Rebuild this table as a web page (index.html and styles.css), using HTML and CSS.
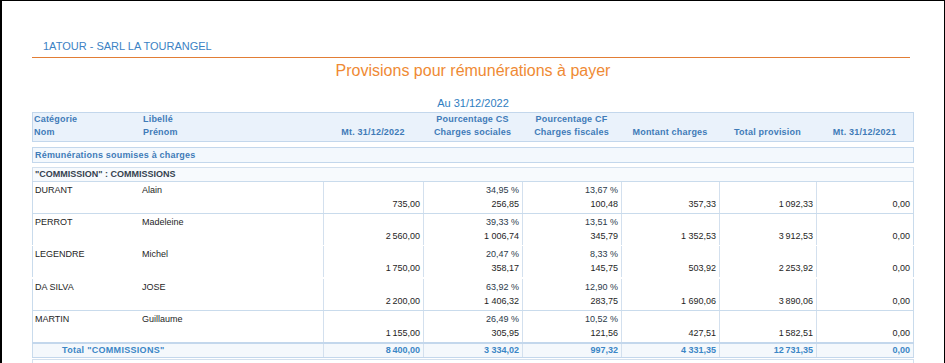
FILE: index.html
```html
<!DOCTYPE html>
<html lang="fr">
<head>
<meta charset="utf-8">
<title>Provisions pour rémunérations à payer</title>
<link rel="stylesheet" href="styles.css">
</head>
<body>
<div class="frame">
  <div class="report">
    <div class="company">1ATOUR - SARL LA TOURANGEL</div>
    <h1 class="title">Provisions pour rémunérations à payer</h1>
    <div class="date">Au 31/12/2022</div>

    <div class="thead">
      <div class="hc left"><span>Catégorie</span><span>Nom</span></div>
      <div class="hc left"><span>Libellé</span><span>Prénom</span></div>
      <div class="hc"><span></span><span>Mt. 31/12/2022</span></div>
      <div class="hc"><span>Pourcentage CS</span><span>Charges sociales</span></div>
      <div class="hc"><span>Pourcentage CF</span><span>Charges fiscales</span></div>
      <div class="hc"><span></span><span>Montant charges</span></div>
      <div class="hc"><span></span><span>Total provision</span></div>
      <div class="hc"><span></span><span>Mt. 31/12/2021</span></div>
    </div>

    <div class="section">Rémunérations soumises à charges</div>

    <div class="group">
      <div class="group-title">"COMMISSION" : COMMISSIONS</div>

      <div class="row sep">
        <div class="cell name"><span>DURANT</span><span></span></div>
        <div class="cell"><span>Alain</span><span></span></div>
        <div class="cell num"><span></span><span>735,00</span></div>
        <div class="cell num"><span class="pct">34,95 %</span><span>256,85</span></div>
        <div class="cell num"><span class="pct">13,67 %</span><span>100,48</span></div>
        <div class="cell num"><span></span><span>357,33</span></div>
        <div class="cell num"><span></span><span>1&thinsp;092,33</span></div>
        <div class="cell num last"><span></span><span>0,00</span></div>
      </div>

      <div class="row sep">
        <div class="cell name"><span>PERROT</span><span></span></div>
        <div class="cell"><span>Madeleine</span><span></span></div>
        <div class="cell num"><span></span><span>2&thinsp;560,00</span></div>
        <div class="cell num"><span class="pct">39,33 %</span><span>1 006,74</span></div>
        <div class="cell num"><span class="pct">13,51 %</span><span>345,79</span></div>
        <div class="cell num"><span></span><span>1 352,53</span></div>
        <div class="cell num"><span></span><span>3&thinsp;912,53</span></div>
        <div class="cell num last"><span></span><span>0,00</span></div>
      </div>

      <div class="row">
        <div class="cell name"><span>LEGENDRE</span><span></span></div>
        <div class="cell"><span>Michel</span><span></span></div>
        <div class="cell num"><span></span><span>1&thinsp;750,00</span></div>
        <div class="cell num"><span class="pct">20,47 %</span><span>358,17</span></div>
        <div class="cell num"><span class="pct">8,33 %</span><span>145,75</span></div>
        <div class="cell num"><span></span><span>503,92</span></div>
        <div class="cell num"><span></span><span>2&thinsp;253,92</span></div>
        <div class="cell num last"><span></span><span>0,00</span></div>
      </div>

      <div class="row wide">
        <div class="cell name"><span>DA SILVA</span><span></span></div>
        <div class="cell"><span>JOSE</span><span></span></div>
        <div class="cell num"><span></span><span>2&thinsp;200,00</span></div>
        <div class="cell num"><span class="pct">63,92 %</span><span>1 406,32</span></div>
        <div class="cell num"><span class="pct">12,90 %</span><span>283,75</span></div>
        <div class="cell num"><span></span><span>1 690,06</span></div>
        <div class="cell num"><span></span><span>3&thinsp;890,06</span></div>
        <div class="cell num last"><span></span><span>0,00</span></div>
      </div>

      <div class="row sep">
        <div class="cell name"><span>MARTIN</span><span></span></div>
        <div class="cell"><span>Guillaume</span><span></span></div>
        <div class="cell num"><span></span><span>1&thinsp;155,00</span></div>
        <div class="cell num"><span class="pct">26,49 %</span><span>305,95</span></div>
        <div class="cell num"><span class="pct">10,52 %</span><span>121,56</span></div>
        <div class="cell num"><span></span><span>427,51</span></div>
        <div class="cell num"><span></span><span>1&thinsp;582,51</span></div>
        <div class="cell num last"><span></span><span>0,00</span></div>
      </div>

      <div class="total">
        <div class="tcell label">Total "COMMISSIONS"</div>
        <div class="tcell num">8&thinsp;400,00</div>
        <div class="tcell num">3 334,02</div>
        <div class="tcell num">997,32</div>
        <div class="tcell num">4 331,35</div>
        <div class="tcell num">12&thinsp;731,35</div>
        <div class="tcell num last">0,00</div>
      </div>
    </div>

    <div class="next"></div>
  </div>
</div>
</body>
</html>
```

FILE: styles.css
```css
* { box-sizing: border-box; }

html, body {
  margin: 0;
  padding: 0;
  background: #fff;
}

body {
  font-family: "Liberation Sans", Arial, sans-serif;
  color: #222;
}

.frame {
  width: 945px;
  height: 363px;
  border-top: 1px solid #000;
  border-left: 2px solid #000;
  border-right: 1px solid #000;
  overflow: hidden;
}

.report {
  margin-left: 30px;
  width: 882px;
}

.company {
  width: 878px;
  padding: 39px 0 4px 11px;
  font-size: 11px;
  line-height: 13px;
  color: #3b82c4;
  border-bottom: 1px solid #e27d35;
}

.title {
  margin: 4px 0 0;
  font-size: 16px;
  line-height: 18px;
  font-weight: normal;
  text-align: center;
  color: #ef8a34;
}

.date {
  margin-top: 17px;
  text-align: center;
  font-size: 11px;
  line-height: 13px;
  color: #2f7ec1;
}

.thead {
  margin-top: 2px;
  display: grid;
  grid-template-columns: 109px 181px 100px 99px 99px 98px 97px 97px;
  border: 1px solid #c3d7ec;
  background: #eaf2fb;
  padding-bottom: 2px;
}

.hc {
  display: flex;
  flex-direction: column;
  align-items: center;
  font-size: 9px;
  font-weight: bold;
  line-height: 13px;
  color: #3f7bb8;
  letter-spacing: 0.2px;
}

.hc span { height: 13px; white-space: nowrap; }

.hc.left { align-items: flex-start; padding-left: 1px; }

.section {
  margin-top: 5px;
  height: 16px;
  border: 1px solid #c3d7ec;
  background: #f3f8fd;
  padding-left: 2px;
  font-size: 9px;
  font-weight: bold;
  line-height: 14px;
  color: #3f7bb8;
  letter-spacing: 0.2px;
}

.group { margin-top: 4px; }

.group-title {
  height: 14px;
  border: 1px solid #d3e0ee;
  border-bottom: none;
  background: #f7fafd;
  padding-left: 2px;
  font-size: 9px;
  font-weight: bold;
  line-height: 13px;
  color: #34414f;
}

.row {
  display: grid;
  grid-template-columns: 110px 181px 100px 99px 99px 98px 97px 98px;
  border-top: 1px solid #fff;
}

.row.sep { border-top-color: #c9dbec; }
.row.wide { border-top-width: 2px; }

.cell {
  display: flex;
  flex-direction: column;
  padding: 1px 0 2px;
  font-size: 9px;
  line-height: 14px;
  color: #1e1e1e;
  white-space: nowrap;
}

.cell span { height: 14px; }

.cell.name {
  border-left: 1px solid #c9dbec;
  padding-left: 2px;
}

.cell.num {
  border-left: 1px solid #d3e0ee;
  text-align: right;
  padding-right: 3px;
}

.cell.last, .tcell.last { border-right: 1px solid #c9dbec; }

.pct { color: #2c3a4a; }

.total {
  display: grid;
  grid-template-columns: 291px 100px 99px 99px 98px 97px 98px;
  height: 16px;
  border-top: 2px solid #c3d7ec;
  border-bottom: 1px solid #c3d7ec;
  background: #f4f8fc;
}

.tcell {
  font-size: 9px;
  line-height: 13px;
  font-weight: bold;
  color: #3b86c6;
  white-space: nowrap;
}

.tcell.label {
  border-left: 1px solid #c9dbec;
  padding-left: 29px;
  letter-spacing: 0.3px;
}

.tcell.num {
  border-left: 1px solid #d3e0ee;
  text-align: right;
  padding-right: 3px;
}

.next {
  margin-top: 1px;
  height: 10px;
  border: 1px solid #d3e0ee;
  border-bottom: none;
}
```
